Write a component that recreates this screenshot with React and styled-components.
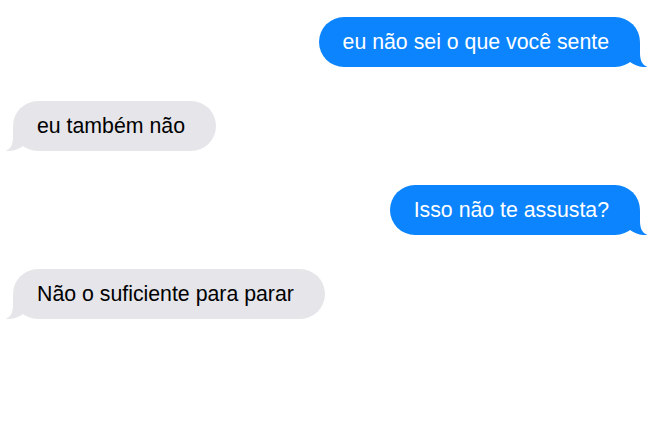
import React from "react";
import styled, { createGlobalStyle } from "styled-components";

const Global = createGlobalStyle`
  html, body { margin: 0; padding: 0; background: #ffffff; }
  body { font-family: "Liberation Sans", Arial, sans-serif; }
`;

const Thread = styled.div`
  display: flex;
  flex-direction: column;
  gap: 34px;
  padding: 17px 19px 0 13px;
  width: 659px;
  height: 426px;
  box-sizing: border-box;
  background: #ffffff;
`;

const Bubble = styled.div`
  position: relative;
  align-self: ${(p) => (p.$sent ? "flex-end" : "flex-start")};
  background: ${(p) => (p.$sent ? "#0b84fe" : "#e5e5ea")};
  color: ${(p) => (p.$sent ? "#ffffff" : "#000000")};
  font-size: 21.3px;
  line-height: 24px;
  padding: 13px 31px 13px 24px;
  border-radius: 25px;
  white-space: nowrap;
`;

const Tail = styled.svg`
  position: absolute;
  bottom: 0;
  width: 30px;
  height: 24px;
  ${(p) =>
    p.$sent
      ? "right: -8px;"
      : "left: -8px; transform: scaleX(-1);"}
`;

function Message({ sent, children }) {
  const fill = sent ? "#0b84fe" : "#e5e5ea";
  return (
    <Bubble $sent={sent}>
      {children}
      <Tail $sent={sent} viewBox="0 0 30 24" aria-hidden="true">
        <path
          d="M0 0 H22 V10 C22 17 24 22 29.5 24 C 24 24.6 18 23 12 19 L0 19 Z"
          fill={fill}
        />
      </Tail>
    </Bubble>
  );
}

export default function App() {
  return (
    <>
      <Global />
      <Thread>
        <Message sent>eu não sei o que você sente</Message>
        <Message>eu também não</Message>
        <Message sent>Isso não te assusta?</Message>
        <Message>Não o suficiente para parar</Message>
      </Thread>
    </>
  );
}
